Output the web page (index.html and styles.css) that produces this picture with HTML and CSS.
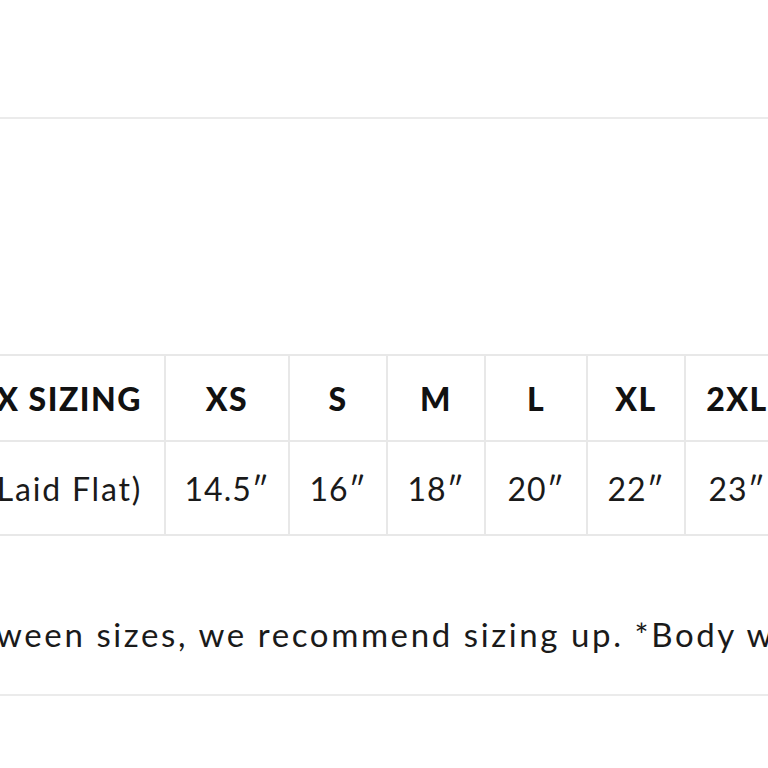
FILE: index.html
```html
<!DOCTYPE html>
<html lang="en">
<head>
<meta charset="utf-8">
<title>Size Chart</title>
<link rel="stylesheet" href="styles.css">
</head>
<body>
<div class="page">
  <hr class="rule">
  <div class="chart">
    <table class="sizes">
      <colgroup>
        <col class="c-label">
        <col class="c-xs">
        <col class="c-s">
        <col class="c-m">
        <col class="c-l">
        <col class="c-xl">
        <col class="c-2xl">
        <col class="c-3xl">
      </colgroup>
      <tr class="head">
        <th class="label">UNISEX SIZING</th>
        <th>XS</th>
        <th>S</th>
        <th>M</th>
        <th>L</th>
        <th>XL</th>
        <th>2XL</th>
        <th>3XL</th>
      </tr>
      <tr class="body">
        <td class="label">Chest (Laid Flat)</td>
        <td>14.5″</td>
        <td>16″</td>
        <td>18″</td>
        <td>20″</td>
        <td>22″</td>
        <td>23″</td>
        <td>25″</td>
      </tr>
    </table>
    <p class="note">If you are between sizes, we recommend sizing up. *Body width measured laid flat.</p>
  </div>
  <hr class="rule">
</div>
</body>
</html>
```

FILE: styles.css
```css
html, body {
  margin: 0;
  padding: 0;
  overflow: hidden;
  background: #ffffff;
}

.page {
  padding-top: 117px;
  font-family: "Lato", "Liberation Sans", sans-serif;
  color: #1a1a1a;
}

.rule {
  margin: 0;
  border: 0;
  border-top: 2px solid #ebebeb;
  height: 0;
}

.chart {
  margin-top: 235px;
  margin-left: -236px;
  width: 1200px;
}

.sizes {
  border-collapse: collapse;
  table-layout: fixed;
  width: 1134px;
}

.c-label { width: 400px; }
.c-xs { width: 124px; }
.c-s { width: 98px; }
.c-m { width: 98px; }
.c-l { width: 102px; }
.c-xl { width: 98px; }
.c-2xl { width: 104px; }
.c-3xl { width: 110px; }

.sizes th,
.sizes td {
  border: 2px solid #e8e8e8;
  padding: 0;
  text-align: center;
  font-size: 32px;
  white-space: nowrap;
}

.sizes th {
  height: 84px;
  font-weight: 900;
  letter-spacing: 1.5px;
  color: #111111;
}

.sizes td {
  height: 92px;
  font-weight: 400;
  letter-spacing: 1px;
  color: #1a1a1a;
}

.sizes td.label {
  letter-spacing: 1.8px;
}

.sizes .label {
  text-align: right;
  padding-right: 22px;
}

.note {
  margin: 74px 0 36px 0;
  padding-left: 5px;
  font-size: 33px;
  line-height: 48px;
  letter-spacing: 2.6px;
  white-space: nowrap;
}
```
